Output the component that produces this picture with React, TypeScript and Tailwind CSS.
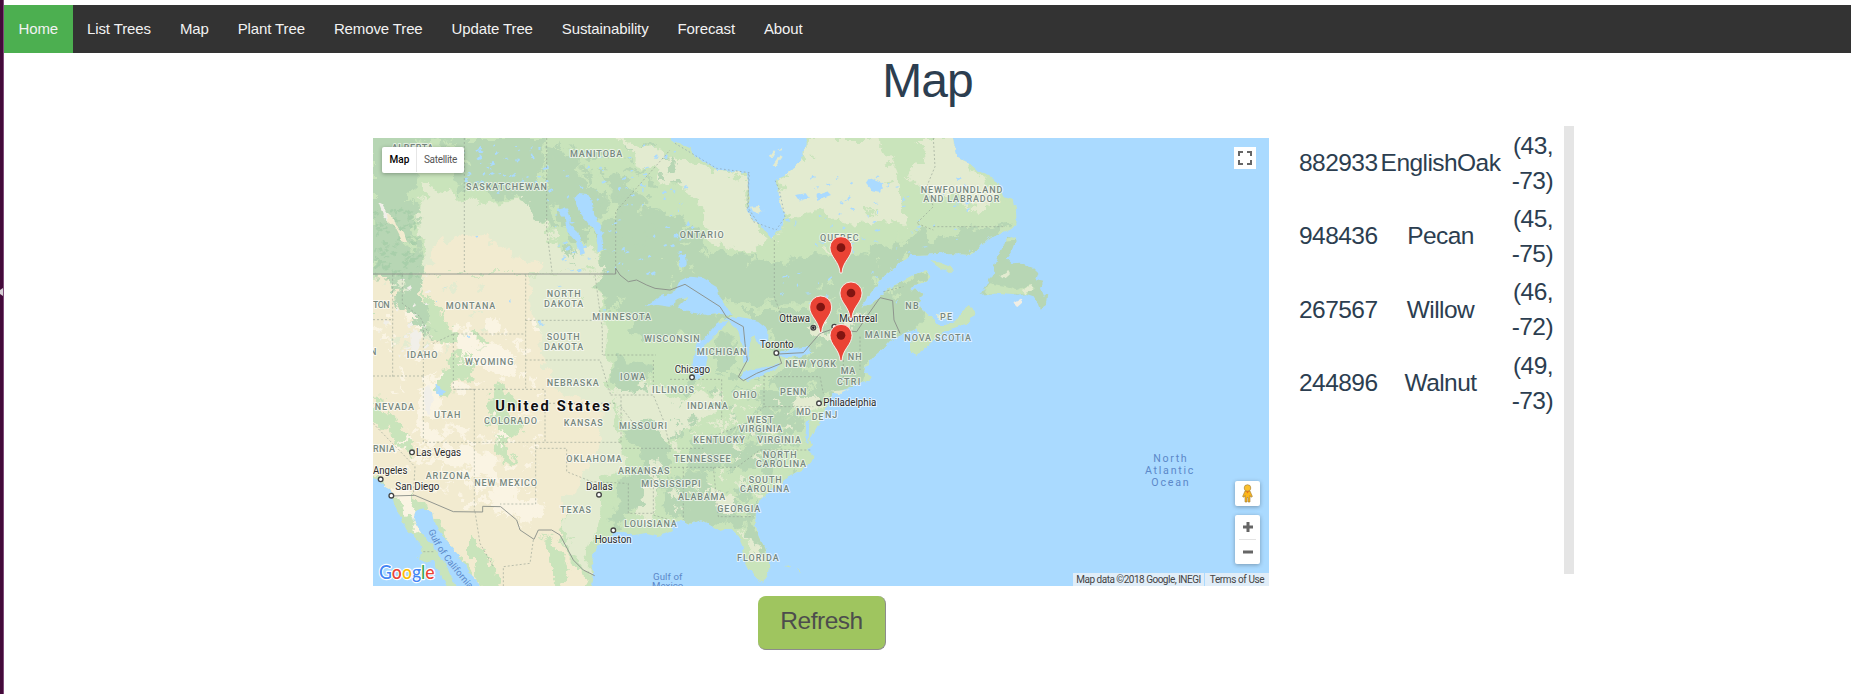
import React from "react";

const NAV = ["Home", "List Trees", "Map", "Plant Tree", "Remove Tree", "Update Tree", "Sustainability", "Forecast", "About"];

const TREES = [
  { id: "882933", kind: "EnglishOak", lat: "(43,", lng: "-73)" },
  { id: "948436", kind: "Pecan", lat: "(45,", lng: "-75)" },
  { id: "267567", kind: "Willow", lat: "(46,", lng: "-72)" },
  { id: "244896", kind: "Walnut", lat: "(49,", lng: "-73)" },
];

const OCEAN = "#aadaff";
const DARK = "#b7d6b4";
const MID = "#c9e4bb";
const PALE = "#e3ebd0";
const SAND = "#f2ebd0";
const CREAM = "#faf4e3";

// Map drawing units are thirds of a pixel.
const LAND =
  "0,0 870,0 915,35 960,55 970,75 1010,100 1040,120 1100,122 1130,130 1135,160 1138,200 1132,235 1145,265 1165,277 1190,310 1205,327 1218,305 1235,300 1245,262 1230,215 1225,180 1215,150 1245,137 1285,100 1300,75 1307,40 1305,0 1745,0 1752,40 1765,85 1795,100 1820,122 1845,130 1870,145 1885,165 1900,200 1930,210 1937,230 1940,285 1920,300 1890,312 1860,320 1840,340 1815,368 1800,375 1780,373 1700,372 1620,375 1590,398 1550,430 1520,465 1490,505 1474,530 1500,524 1530,500 1560,475 1600,450 1640,430 1670,424 1681,440 1670,455 1630,465 1620,478 1645,480 1660,492 1645,520 1660,545 1685,560 1700,585 1725,585 1760,572 1775,545 1800,525 1812,545 1800,575 1770,592 1730,603 1690,630 1660,660 1640,677 1620,665 1620,640 1645,610 1640,595 1615,605 1590,615 1560,632 1540,655 1510,680 1490,705 1481,725 1505,740 1500,752 1475,755 1450,765 1430,775 1390,792 1370,815 1368,835 1352,870 1335,900 1320,930 1325,945 1310,960 1330,980 1320,1000 1295,1020 1260,1035 1240,1055 1200,1080 1170,1110 1158,1140 1155,1180 1165,1215 1182,1250 1197,1290 1198,1325 1180,1358 1162,1350 1140,1320 1125,1290 1118,1250 1105,1220 1080,1195 1050,1203 1020,1185 990,1170 960,1181 940,1171 900,1178 912,1200 885,1212 860,1219 820,1210 790,1216 750,1205 730,1210 700,1235 675,1260 665,1290 672,1330 664,1380 348,1380 300,1330 270,1280 240,1245 210,1210 195,1180 190,1152 160,1135 138,1143 130,1165 150,1200 190,1250 225,1300 262,1380 232,1380 210,1330 190,1292 165,1300 140,1284 160,1270 148,1240 110,1200 90,1160 72,1120 60,1075 30,1055 0,1035";

const PATCHES: [string, string][] = [
  // northern forests and prairie
  [MID, "0,0 1000,0 900,330 730,440 560,500 0,440"],
  [DARK, "0,0 240,0 220,80 140,150 150,240 120,300 150,400 165,440 150,520 180,560 130,640 90,600 60,440 0,420"],
  [MID, "150,24 220,40 190,110 150,160 165,190 120,230 135,150"],
  [PALE, "150,155 220,180 300,215 380,215 470,210 500,260 540,300 560,350 690,370 700,432 160,432 150,380 140,280 160,200"],
  [DARK, "230,24 520,24 530,110 500,140 540,180 545,240 570,300 490,270 470,210 380,200 330,170 270,190 240,130 300,100"],
  [DARK, "540,50 630,80 620,140 680,170 700,240 640,350 600,320 570,250 530,210"],
  [PALE, "740,24 1000,110 1130,130 1135,235 1165,280 1190,330 1170,370 1120,370 1030,350 980,280 970,220 900,180 860,120 810,100"],
  [MID, "880,160 960,190 1000,250 1010,310 1090,360 1160,390 1120,410 980,390 880,330 820,250 830,190"],
  [DARK, "700,120 780,160 840,240 900,250 980,290 1020,350 1100,375 1230,400 1300,380 1400,385 1480,340 1560,350 1640,310 1740,300 1840,290 1940,280 1800,380 1610,380 1480,530 1420,620 1350,640 1250,620 1130,580 1040,520 940,480 830,500 700,470 690,300 740,240"],
  [PALE, "1310,24 1745,24 1800,110 1880,165 1860,230 1740,220 1680,290 1560,280 1500,320 1400,370 1290,340 1210,340 1250,260 1230,180 1215,150 1300,90"],
  [MID, "1500,24 1640,24 1650,90 1610,130 1700,210 1780,210 1800,250 1900,200 1930,220 1935,280 1790,300 1690,330 1610,290 1590,190 1570,110"],
  [MID, "1250,260 1350,240 1450,290 1570,270 1640,310 1540,340 1470,380 1370,350 1280,400 1200,370"],
  [SAND, "230,330 280,305 340,320 400,350 440,385 510,390 520,432 160,432 180,380"],
  // western states
  [SAND, "0,434 735,434 700,540 690,690 730,820 720,930 690,1000 600,1080 570,1200 610,1290 650,1380 340,1380 200,1190 150,1120 60,1075 0,1035"],
  [DARK, "70,434 160,434 150,510 190,560 220,620 160,610 110,560 80,510"],
  [MID, "160,490 210,530 240,600 330,610 350,640 290,620 240,650 180,610"],
  [MID, "240,690 280,650 320,690 300,740 250,760 220,810 190,790"],
  [MID, "350,790 400,770 440,820 420,850 460,900 400,930 340,880 370,850"],
  [MID, "370,930 400,920 420,980 440,960 450,990 400,1000 380,960"],
  [MID, "9,790 40,820 70,870 120,930 140,990 90,960 50,900 9,860"],
  [PALE, "465,434 740,434 750,690 790,790 750,880 760,1000 690,1060 700,1150 660,1250 650,1330 600,1250 575,1160 600,1070 660,1000 700,940 680,830 570,790 530,700 490,560"],
  [CREAM, "160,745 210,755 200,840 170,880 220,930 180,960 150,900"],
  [CREAM, "230,940 310,960 380,990 390,1040 330,1050 270,1010 200,990"],
  [CREAM, "350,1090 400,1060 440,1100 500,1120 520,1160 450,1180 400,1130 380,1150"],
  [CREAM, "250,600 300,590 330,640 400,650 450,690 420,740 350,720 300,690 260,650"],
  [CREAM, "60,1080 100,1085 140,1150 180,1210 150,1200 110,1140"],
  [MID, "300,1200 330,1260 370,1310 400,1380 350,1380 300,1300"],
  [MID, "520,1210 560,1240 600,1320 560,1380 540,1290"],
  // eastern states
  [MID, "690,434 1000,520 1500,520 1640,430 1670,460 1800,570 1650,680 1500,720 1370,870 1320,1010 1160,1130 1200,1340 1130,1310 1100,1220 900,1190 740,1205 700,1180 740,1060 765,980 730,820 700,640"],
  [DARK, "690,434 737,434 880,480 1080,560 1000,630 900,610 840,640 780,600 820,550 740,560 700,500"],
  [PALE, "720,780 830,760 930,800 1060,790 1040,850 930,890 900,950 820,900 760,870"],
  [DARK, "1130,540 1300,540 1500,500 1640,430 1670,450 1650,480 1670,560 1600,630 1490,700 1460,770 1390,800 1330,830 1290,870 1260,920 1240,1000 1130,1020 1060,1000 1120,930 1160,830 1200,740 1270,720 1260,680 1140,600"],
  [DARK, "720,690 830,710 820,780 740,800"],
  [DARK, "750,890 850,880 900,960 880,1050 840,1130 730,1180 740,1060 830,1000"],
  [DARK, "950,960 1080,900 1200,850 1280,880 1230,960 1120,1010 1020,1030 950,1010"],
  [DARK, "880,1050 990,1030 1060,1100 1160,1130 1155,1170 1080,1190 960,1180 890,1165"],
  [DARK, "1040,620 1080,600 1110,660 1090,720 1030,720"],
  [DARK, "1120,1160 1160,1180 1190,1280 1180,1300 1130,1220"],
  [PALE, "840,990 870,980 860,1080 830,1180 800,1180 830,1080"],
  [PALE, "1030,1080 1100,1110 1090,1150 1040,1130"],
  [PALE, "1270,815 1330,800 1350,830 1290,860 1260,840"],
  [PALE, "1110,1190 1150,1240 1180,1290 1150,1290 1130,1240"],
  [PALE, "1300,590 1400,600 1450,560 1480,530 1470,570 1400,620 1330,625"],
];

const WATER = [
  // Manitoba lakes
  "612,205 625,192 655,195 668,215 672,250 690,290 700,340 692,370 682,365 684,315 650,275 625,240",
  "562,240 590,232 600,260 598,285 625,310 645,370 630,375 620,335 590,300 585,265",
  // Superior
  "826,532 870,500 915,482 930,450 960,440 1000,444 1040,468 1050,500 1070,530 1085,555 1050,552 1010,556 970,545 940,545 925,530 955,500 925,510 900,530 860,525",
  // Michigan
  "1072,572 1040,580 1000,630 985,620 970,680 966,730 978,750 1000,735 1010,680 1000,650 1030,620 1060,590",
  // Huron
  "1065,565 1110,560 1160,572 1195,600 1195,630 1170,650 1150,615 1140,640 1135,690 1120,700 1118,650 1105,600",
  // Erie and Ontario
  "1105,745 1120,725 1165,715 1230,700 1232,710 1180,735 1130,752",
  "1220,672 1260,655 1310,650 1325,665 1290,680 1230,682",
  "1500,145 1540,160 1530,185 1505,180 1490,160",
  "1275,195 1310,190 1320,205 1290,215",
  "1340,195 1370,185 1380,195 1340,210",
  "195,755 203,770 222,784 212,796 200,785",
  "925,375 948,370 950,405 932,415",
  "1310,880 1318,870 1315,940 1305,930",
];

const ISLANDS: [string, string][] = [
  [DARK, "1905,335 1915,320 1938,330 1925,365 1910,385 1925,400 1950,398 1985,410 2005,430 1998,450 2020,455 2010,475 2020,500 2032,490 2028,525 2010,538 1995,500 1970,492 1940,497 1910,488 1870,490 1832,494 1850,465 1868,430 1885,380"],
  [MID, "1838,488 1860,460 1905,468 1940,480 1980,465 1995,475 1970,492 1930,495"],
  [PALE, "1955,480 1985,465 1990,480 1965,490"],
  [MID, "1910,325 1938,322 1930,332 1905,335"],
  [PALE, "1885,440 1915,420 1920,430 1900,448"],
  ["#f1eee4", "1930,520 1955,505 1960,512 1942,528"],
  [MID, "1680,392 1710,398 1745,412 1755,425 1735,425 1700,408"],
  [PALE, "1140,230 1165,228 1180,243 1165,250 1145,242"],
  [PALE, "1700,555 1730,545 1745,550 1725,568 1705,566"],
  [MID, "1240,1308 1262,1305 1250,1312"],
  [MID, "1284,1315 1290,1318 1288,1330"],
  [PALE, "1380,785 1440,778 1410,792"],
];

const BORDERS = [
  "9,432 737,432 737,415 750,435 775,455 800,450 830,465 855,475 900,480 945,463 1050,530 1070,562 1120,590 1125,640 1132,690 1105,740 1120,752 1160,730 1235,700 1225,672 1300,668 1350,610 1380,600 1460,605 1490,560 1530,503 1568,512 1572,570 1590,610",
  "65,1098 135,1096 250,1145 338,1146 338,1129 392,1130 440,1170 450,1200 492,1228 505,1200 545,1200 570,1215 610,1290 640,1320 674,1337",
];

const STATE_LINES =
  "M283 24V432M530 24V300L547 432M737 432V245L900 60M467 434V775M467 571H700M675 434L697 600V675M700 675H858M467 690H690L722 795M250 612V778H525V820M250 612H467M68 434V740M9 738H160M160 738V937H313M160 600V738M313 778V1146M313 778H250M525 820H735M525 820V937M313 937H753M497 937V1122H390M497 955H590V1025L665 1055L770 1060M753 937V795M722 795H850M753 955H900M753 830L790 880M850 690V795L880 870L900 950M9 880L135 1010L130 1096M97 434V520L150 560L190 640L250 612M9 569H70M1213 330V500L1235 560L1300 570M900 748H1055M1055 748V870M1182 735V830H1330M1182 830L1130 880L1000 930M900 1012H1100L1170 960H1325M940 1012V1170M1030 1012L1045 1160H1150M850 1012V1155L900 1170M1182 740H1350L1360 790M900 955H1000M1420 690V760M1470 620V720M1690 290H1900M1690 24L1695 110L1670 170L1690 230L1640 280L1690 300M775 1060V1150H850M315 1145L330 1240L370 1310M490 1230L480 1300L400 1310V1368M160 1265H195M1135 130V235L1165 280M1540 485L1600 470";

type Label = [string, number, number, number];

const STATES: Label[] = [
  ["ALBERTA", 65, 190, 62],
  ["MANITOBA", 600, 757, 82],
  ["SASKATCHEWAN", 288, 531, 181],
  ["MONTANA", 227, 376, 537],
  ["NORTH", 530, 632, 502],
  ["DAKOTA", 522, 640, 530],
  ["SOUTH", 530, 629, 631],
  ["DAKOTA", 522, 640, 659],
  ["MINNESOTA", 667, 843, 570],
  ["WISCONSIN", 822, 989, 635],
  ["TON", 9, 59, 535],
  ["N", 0, 18, 674],
  ["IDAHO", 110, 202, 685],
  ["WYOMING", 285, 430, 706],
  ["NEBRASKA", 530, 686, 769],
  ["IOWA", 750, 826, 750],
  ["NEVADA", 14, 132, 839],
  ["UTAH", 192, 271, 865],
  ["COLORADO", 342, 501, 882],
  ["KANSAS", 581, 698, 889],
  ["MISSOURI", 747, 891, 897],
  ["ILLINOIS", 846, 972, 790],
  ["RNIA", 9, 75, 967],
  ["ARIZONA", 167, 299, 1047],
  ["NEW MEXICO", 313, 501, 1069],
  ["OKLAHOMA", 589, 755, 996],
  ["ARKANSAS", 744, 898, 1033],
  ["MISSISSIPPI", 814, 992, 1071],
  ["TEXAS", 571, 663, 1149],
  ["LOUISIANA", 763, 920, 1190],
  ["ONTARIO", 929, 1061, 323],
  ["QUEBEC", 1350, 1466, 334],
  ["NEWFOUNDLAND", 1652, 1897, 188],
  ["AND LABRADOR", 1660, 1888, 215],
  ["NB", 1606, 1646, 537],
  ["PE", 1710, 1746, 569],
  ["MAINE", 1484, 1579, 624],
  ["NOVA SCOTIA", 1603, 1803, 634],
  ["MICHIGAN", 980, 1129, 674],
  ["NH", 1433, 1475, 690],
  ["NEW YORK", 1246, 1398, 712],
  ["MA", 1412, 1456, 733],
  ["CTRI", 1401, 1471, 765],
  ["OHIO", 1088, 1160, 805],
  ["PENN", 1230, 1309, 795],
  ["INDIANA", 951, 1073, 836],
  ["MD", 1279, 1322, 855],
  ["DE", 1325, 1360, 870],
  ["NJ", 1365, 1402, 863],
  ["WEST", 1131, 1210, 879],
  ["VIRGINIA", 1106, 1237, 905],
  ["KENTUCKY", 970, 1124, 940],
  ["VIRGINIA", 1162, 1293, 940],
  ["TENNESSEE", 912, 1082, 996],
  ["NORTH", 1178, 1280, 985],
  ["CAROLINA", 1158, 1308, 1012],
  ["SOUTH", 1136, 1235, 1060],
  ["CAROLINA", 1110, 1258, 1087],
  ["ALABAMA", 924, 1066, 1111],
  ["GEORGIA", 1042, 1171, 1146],
  ["FLORIDA", 1101, 1226, 1294],
];

const CITIES: Label[] = [
  ["Ottawa", 1228, 1320, 577],
  ["Montreal", 1408, 1522, 575],
  ["Toronto", 1170, 1271, 653],
  ["Chicago", 914, 1020, 728],
  ["Philadelphia", 1360, 1519, 829],
  ["Las Vegas", 138, 273, 977],
  ["Angeles", 9, 112, 1031],
  ["San Diego", 76, 208, 1079],
  ["Dallas", 648, 728, 1080],
  ["Houston", 674, 785, 1238],
];

const DOTS = [[1330, 593], [1219, 669], [966, 742], [1347, 820], [126, 967], [32, 1048], [64, 1097], [687, 1094], [730, 1201], [1393, 590]];

const PINS = [[1413, 353], [1443, 489], [1352, 531], [1413, 616]];

// Small seeded generator so the scattered lakes are the same on each render.
function scatter(seed: number, n: number, x0: number, y0: number, x1: number, y1: number, size: number) {
  let s = seed;
  const next = () => {
    s = (s * 16807) % 2147483647;
    return s / 2147483647;
  };
  next();
  let d = "";
  for (let i = 0; i < n; i++) {
    const x = x0 + next() * (x1 - x0);
    const y = y0 + next() * (y1 - y0);
    const a = size * (0.3 + next());
    const b = size * (0.2 + next() * 0.5);
    d += `M${x.toFixed(0)} ${y.toFixed(0)}l${a.toFixed(0)} ${(-b).toFixed(0)}l${(a * 0.5).toFixed(0)} ${b.toFixed(0)}l${(-a).toFixed(0)} ${b.toFixed(0)}z`;
  }
  return d;
}

function Labels({ items, size, fill, weight = 400, adjust = "spacing" }: { items: Label[]; size: number; fill: string; weight?: number; adjust?: "spacing" | "spacingAndGlyphs" }) {
  return (
    <g fontSize={size} fill={fill} fontWeight={weight} stroke="#ffffff" strokeOpacity={0.65} strokeWidth={6} strokeLinejoin="round" paintOrder="stroke">
      {items.map(([t, a, b, y], i) => (
        <text key={i} x={a} y={y} textLength={b - a} lengthAdjust={adjust}>{t}</text>
      ))}
    </g>
  );
}

function MapCanvas() {
  return (
    <svg className="block h-[448px] w-[896px]" viewBox="9 24 2688 1344" fontFamily="Roboto, sans-serif">
      <defs>
        <clipPath id="land"><polygon points={LAND} /></clipPath>
        <filter id="rough" x="-50" y="-50" width="2150" height="1450" filterUnits="userSpaceOnUse">
          <feTurbulence type="fractalNoise" baseFrequency="0.022" numOctaves="4" seed="4" />
          <feDisplacementMap in="SourceGraphic" scale="70" xChannelSelector="R" yChannelSelector="G" />
        </filter>
        <filter id="coast" x="-50" y="-50" width="2150" height="1450" filterUnits="userSpaceOnUse">
          <feTurbulence type="fractalNoise" baseFrequency="0.05" numOctaves="2" seed="9" />
          <feDisplacementMap in="SourceGraphic" scale="16" xChannelSelector="R" yChannelSelector="G" />
        </filter>
      </defs>
      <rect x="0" y="0" width="2700" height="1400" fill={OCEAN} />
      <g filter="url(#coast)">
        <g clipPath="url(#land)">
          <rect x="0" y="0" width="2100" height="1400" fill={MID} />
          <g filter="url(#rough)">
            {PATCHES.map(([c, p], i) => <polygon key={i} points={p} fill={c} />)}
            <path fill={MID} d={scatter(1187, 50, 600, 60, 1650, 560, 20) + scatter(12991, 70, 1040, 620, 1400, 1160, 24)} />
            <path fill={PALE} d={scatter(21773, 50, 880, 760, 1240, 1150, 18) + scatter(22111, 25, 20, 440, 330, 690, 18)} />
            <path fill={CREAM} d={scatter(31337, 110, 20, 560, 500, 1150, 22)} />
            <path fill={DARK} d={scatter(41999, 60, 550, 40, 900, 420, 24) + scatter(42421, 70, 900, 720, 1280, 1140, 22)} />
          </g>
          <path fill="#9fc9a3" opacity="0.6" d={scatter(51713, 110, 9, 240, 140, 450, 12)} />
          <path fill="#f1efe9" d={scatter(61027, 30, 15, 440, 180, 680, 12) + "M120 610l18 -14l16 24l-8 40l-22 8zM165 775l16-8l8 50l-14 40l-12-20zM24 215l14 8l16 26l20 20l-6 12l-26-20z"} />
          <path fill={SAND} d="M50 250l20 10l10 30l22 20l10 30l-14-6l-18-36l-24-20z" />
          <path fill={OCEAN} d={scatter(71551, 100, 530, 40, 960, 440, 9) + scatter(72901, 45, 270, 40, 530, 190, 9) + scatter(73303, 110, 1230, 140, 1800, 540, 8) + scatter(74177, 12, 180, 240, 700, 680, 7)} />
        </g>
        {WATER.map((p, i) => <polygon key={i} points={p} fill={OCEAN} />)}
        {ISLANDS.map(([c, p], i) => <polygon key={i} points={p} fill={c} />)}
        <path fill={PALE} d="M1198 80l14-20l4 6l-12 20zM1208 108l22-32l8 4l-20 28zM1222 60l12-10l2 8z" />
      </g>
      <path d={STATE_LINES} fill="none" stroke="#8d9a8d" strokeOpacity={0.65} strokeWidth={2.6} strokeDasharray="6 6" />
      <path d="M915 40L1040 115L1138 128L1132 235L1150 275L1218 300L1245 262L1228 180L1215 150" fill="none" stroke="#8fa6b4" strokeWidth={2.2} strokeDasharray="5 7" />
      {BORDERS.map((p, i) => <polyline key={i} points={p} fill="none" stroke="#8b908a" strokeWidth={2.8} strokeLinejoin="round" />)}

      <Labels items={STATES} size={27} fill="#77887f" weight={500} />
      <g fill="#ffffff" stroke="#444444" strokeWidth={4}>
        {DOTS.map(([x, y]) => <circle key={x + "-" + y} cx={x} cy={y} r={7} />)}
      </g>
      <circle cx={1330} cy={593} r={4} fill="#222222" />
      <Labels items={CITIES} size={30} fill="#2b2b2b" weight={400} adjust="spacingAndGlyphs" />
      <text x={376} y={843} fontSize={44} fontWeight={700} fill="#111111" stroke="#ffffff" strokeOpacity={0.8} strokeWidth={6} paintOrder="stroke" textLength={343}>United States</text>
      <g fill="#5b88c9" fontSize={32}>
        <text x={2350} y={997} textLength={100}>North</text>
        <text x={2325} y={1032} textLength={145}>Atlantic</text>
        <text x={2344} y={1067} textLength={112}>Ocean</text>
        <text x={849} y={1351} fontSize={29} textLength={88}>Gulf of</text>
        <text x={846} y={1378} fontSize={29} textLength={94}>Mexico</text>
        <path id="gulf" d="M175 1202C195 1258 225 1290 305 1388" fill="none" />
        <text fontSize={28}><textPath href="#gulf" textLength={215}>Gulf of California</textPath></text>
      </g>
      {PINS.map(([x, y], i) => (
        <g key={i} transform={`translate(${x} ${y})`}>
          <path d="M-3 76C-4 42 -33 28 -33 0A33 33 0 0 1 33 0C33 28 4 42 3 76Z" fill="#ea4335" stroke="#ffffff" strokeWidth={2.5} />
          <circle r={13} fill="#811411" />
        </g>
      ))}
      <text x={27} y={1346} fontFamily="Lato, sans-serif" fontSize={57} fontWeight={500} textLength={167} lengthAdjust="spacingAndGlyphs" stroke="#ffffff" strokeWidth={7} strokeLinejoin="round" paintOrder="stroke">
        <tspan fill="#4285f4">G</tspan><tspan fill="#ea4335">o</tspan><tspan fill="#fbbc05">o</tspan><tspan fill="#4285f4">g</tspan><tspan fill="#34a853">l</tspan><tspan fill="#ea4335">e</tspan>
      </text>
    </svg>
  );
}

function MapView() {
  return (
    <div className="relative h-[448px] w-[896px] shrink-0 overflow-hidden font-[Roboto,sans-serif]">
      <MapCanvas />
      <div className="absolute top-[9px] left-[9px] flex h-[26px] w-[82px] items-center rounded-[2px] bg-white pb-px text-[10px] shadow-[0_1px_4px_rgba(0,0,0,0.3)]">
        <span className="flex h-full w-[35px] items-center justify-center border-r border-[#e6e6e6] pl-px font-medium text-black">Map</span>
        <span className="flex-1 text-center tracking-[-0.3px] text-[#565656]">Satellite</span>
      </div>
      <div className="absolute top-[9px] left-[861px] flex h-[22px] w-[22px] items-center justify-center bg-white">
        <svg className="h-[14px] w-[14px]" viewBox="0 0 14 14" fill="none" stroke="#666666" strokeWidth="2">
          <path d="M1 5V1H5M9 1H13V5M13 9V13H9M5 13H1V9" />
        </svg>
      </div>
      <div className="absolute top-[343px] left-[862px] flex h-[25px] w-[25px] items-center justify-center rounded-[2px] bg-white shadow-[0_1px_4px_rgba(0,0,0,0.3)]">
        <svg className="h-[19px] w-[11px]" viewBox="0 0 11 19">
          <path d="M3 7H8L10.4 12.5L9 13.2L8 11.5V18H6V13.5H5V18H3V11.5L2 13.2L.6 12.5Z" fill="#fbb61a" stroke="#9c7b3a" strokeWidth=".6" />
          <circle cx="5.5" cy="4" r="3.3" fill="#fbc02d" stroke="#9c7b3a" strokeWidth=".6" />
          <path d="M4 7.2H7L5.5 9.5Z" fill="#e8711c" />
        </svg>
      </div>
      <div className="absolute top-[377px] left-[862px] flex h-[49px] w-[25px] flex-col items-center rounded-[2px] bg-white shadow-[0_1px_4px_rgba(0,0,0,0.3)]">
        <svg className="h-[49px] w-[25px]" viewBox="0 0 25 49" fill="none">
          <path d="M8 12H18M13 7V17M8 37H18" stroke="#666666" strokeWidth="3" />
          <path d="M4 24.5H21" stroke="#e3e3e3" />
        </svg>
      </div>
      <div className="absolute top-[435px] left-[700px] flex h-[13px] w-[196px] gap-px text-[10px] leading-[13px] whitespace-nowrap text-[#444444]">
        <span className="w-[131px] bg-[#e0edf8] text-center tracking-[-0.5px]">Map data ©2018 Google, INEGI</span>
        <span className="flex-1 bg-[#e0edf8] text-center tracking-[-0.4px]">Terms of Use</span>
      </div>
    </div>
  );
}

export default function App() {
  return (
    <div className="flex h-[694px] w-[1851px] overflow-hidden bg-white font-['Liberation_Sans',Arial,sans-serif] text-[#2c3e50]">
      <div className="flex w-1 shrink-0 items-center border-r border-[#7e4a78] bg-[#430a3a]">
        <svg className="mb-[110px] h-2 w-[3px] shrink-0" viewBox="0 0 3 8"><path d="M3 0V8L0 6V2Z" fill="#d8d0d6" /></svg>
      </div>
      <div className="flex flex-1 flex-col pt-[5px]">
        <nav className="flex h-12 shrink-0 bg-[#333333] text-[15px] tracking-[-0.12px] text-[#f2f2f2]">
          {NAV.map((n, i) => (
            <a key={n} className={i === 0 ? "flex items-center bg-[#4caf50] px-[14.5px]" : "flex items-center px-[14.5px]"}>{n}</a>
          ))}
        </nav>
        <h1 className="h-[73px] pt-px text-center text-[48px] leading-[53px] tracking-[-1px]">Map</h1>
        <div className="flex pl-[369px]">
          <div className="flex flex-col items-center pt-3">
            <MapView />
            <button className="mt-[10px] ml-[2px] h-[54px] w-32 rounded-[8px] border-r border-b border-[#8c8c8c] bg-[#9fc55f] pb-[2px] text-[24.5px] tracking-[-0.5px] text-[#4d4d4d]">Refresh</button>
          </div>
          <div className="ml-[25px] flex h-[448px] w-[280px] justify-between">
            <div className="flex flex-col text-[24.5px] leading-[35px] tracking-[-0.55px]">
              {TREES.map((t) => (
                <div key={t.id} className="flex h-[73.3px] items-center">
                  <span className="w-[84px] pl-[5px]">{t.id}</span>
                  <span className="w-[124px] pl-px text-center">{t.kind}</span>
                  <span className="w-[51px] text-right">{t.lat}<br />{t.lng}</span>
                </div>
              ))}
            </div>
            <div className="w-[10px] bg-[#e5e5e5]" />
          </div>
        </div>
      </div>
    </div>
  );
}
